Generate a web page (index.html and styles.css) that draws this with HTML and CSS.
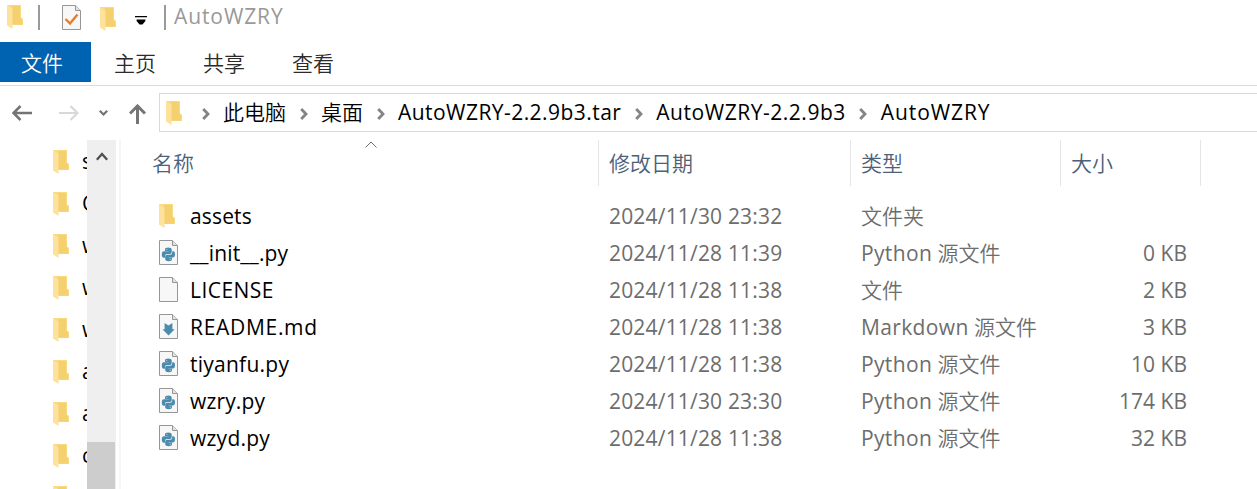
FILE: index.html
```html
<!DOCTYPE html>
<html lang="zh-CN">
<head>
<meta charset="utf-8">
<title>AutoWZRY</title>
<link rel="stylesheet" href="styles.css">
</head>
<body>
<svg class="defs" width="0" height="0">
  <symbol id="folder" viewBox="0 0 16 24">
    <path d="M0 0H14V12.5L16 14V20H4Z" fill="#f9da80"/>
    <path d="M5 1H13V12.5L15 14.5V19.5H5Z" fill="#f4d06e"/>
    <path d="M0 0L5.5 3.5V24L0 20.5Z" fill="#fee29b"/>
  </symbol>
  <symbol id="page" viewBox="0 0 19 25">
    <path d="M.5.5H13.5L18.5 5.5V24.5H.5Z" fill="#f7f7f7" stroke="#969696"/>
    <path d="M13.5 .5V5.5H18.5" fill="#e2e2e2" stroke="#969696"/>
  </symbol>
  <symbol id="python" viewBox="0 0 19 25">
    <use href="#page"/>
    <path d="M6 11V9.3Q6 7.6 9.2 7.6T12.7 9.5V12.3Q12.7 14 11 14H7.8Q6 14 6 16V17.7H4.8Q2.8 17.7 2.8 14.4T5 11.2H9.7V11Z" fill="#4b8bad"/>
    <path d="M13 17.8V19.3Q13 21.2 9.7 21.2T6.2 19.3V16.6Q6.2 14.8 8 14.8H11.2Q13.2 14.8 13.2 12.8V11.2H14.3Q16 11.2 16 14.3T14 17.5H9.3V17.8Z" fill="#4b8bad"/>
    <path d="M7.2 9.2h1.1v.9H7.2zM10.7 18.8h1.1v.9h-1.1z" fill="#c9dde7"/>
  </symbol>
  <symbol id="markdown" viewBox="0 0 19 25">
    <use href="#page"/>
    <path d="M5.6 9L9.5 11.5L13.4 9V15.2H15.7L9.5 21.5L3.5 15.2H5.6Z" fill="#4b8bad"/>
  </symbol>
  <symbol id="sep" viewBox="0 0 8 12"><path d="M1.2 1L6 6L1.2 11" fill="none" stroke="#848484" stroke-width="2.8"/></symbol>
</svg>

<header class="titlebar">
  <svg class="folder"><use href="#folder"/></svg>
  <i class="bar bar-a"></i>
  <svg class="page check" viewBox="0 0 19 25"><use href="#page"/><path d="M3.5 14L8 18.5L15.5 9.5" fill="none" stroke="#e47e2c" stroke-width="2.4"/></svg>
  <svg class="folder second"><use href="#folder"/></svg>
  <svg class="customize" viewBox="0 0 12 9"><path d="M0 0H12V1.3H0ZM1.6 3.5H10.4V5L7.5 8.5H4.5L1.6 5Z"/></svg>
  <i class="bar bar-b"></i>
  <span class="title">AutoWZRY</span>
</header>

<nav class="tabs">
  <span class="tab active">文件</span><span class="tab">主页</span><span class="tab">共享</span><span class="tab">查看</span>
</nav>

<div class="navigation">
  <div class="arrows">
    <svg class="back" viewBox="0 0 20 16"><path d="M20 8H2M8.5 1L1.5 8L8.5 15" fill="none" stroke="#747474" stroke-width="2.5"/></svg>
    <svg class="forward" viewBox="0 0 20 16"><path d="M0 8H18M11.5 1L18.5 8L11.5 15" fill="none" stroke="#d8d8d8" stroke-width="2.2"/></svg>
    <svg class="recent" viewBox="0 0 9 6"><path d="M.8.8L4.5 4.5L8.2.8" fill="none" stroke="#747474" stroke-width="2.2"/></svg>
    <svg class="up" viewBox="0 0 17 20"><path d="M8.5 20V2M1 9.5L8.5 2L16 9.5" fill="none" stroke="#747474" stroke-width="3"/></svg>
  </div>
  <div class="address">
    <svg class="folder"><use href="#folder"/></svg>
    <svg class="sep"><use href="#sep"/></svg><span class="crumb pc">此电脑</span>
    <svg class="sep"><use href="#sep"/></svg><span class="crumb desk">桌面</span>
    <svg class="sep"><use href="#sep"/></svg><span class="crumb tar">AutoWZRY-2.2.9b3.tar</span>
    <svg class="sep"><use href="#sep"/></svg><span class="crumb ver">AutoWZRY-2.2.9b3</span>
    <svg class="sep"><use href="#sep"/></svg><span class="crumb last">AutoWZRY</span>
  </div>
</div>

<main class="content">
  <aside class="tree">
    <div class="node"><svg class="folder"><use href="#folder"/></svg><span>s</span></div>
    <div class="node"><svg class="folder"><use href="#folder"/></svg><span>C</span></div>
    <div class="node"><svg class="folder"><use href="#folder"/></svg><span>w</span></div>
    <div class="node"><svg class="folder"><use href="#folder"/></svg><span>w</span></div>
    <div class="node"><svg class="folder"><use href="#folder"/></svg><span>w</span></div>
    <div class="node"><svg class="folder"><use href="#folder"/></svg><span>a</span></div>
    <div class="node"><svg class="folder"><use href="#folder"/></svg><span>a</span></div>
    <div class="node"><svg class="folder"><use href="#folder"/></svg><span>c</span></div>
    <div class="node"><svg class="folder"><use href="#folder"/></svg></div>
  </aside>
  <div class="scrollbar">
    <svg viewBox="0 0 12 9"><path d="M.8 7.8L6 2L11.2 7.8" fill="none" stroke="#505050" stroke-width="2.4"/></svg>
    <div class="thumb"></div>
  </div>
  <section class="files">
    <div class="grid head">
      <span class="name">名称<svg class="sort" viewBox="0 0 12 7"><path d="M.5 6.5L6 1L11.5 6.5" fill="none" stroke="#6c6c6c"/></svg></span>
      <span>修改日期</span><span>类型</span><span>大小</span>
    </div>
    <div class="grid row"><span class="name"><svg class="folder"><use href="#folder"/></svg><b class="n1">assets</b></span><span class="date">2024/11/30 23:32</span><span>文件夹</span><span class="size"></span></div>
    <div class="grid row"><span class="name"><svg class="page"><use href="#python"/></svg><b class="n2">__init__.py</b></span><span class="date">2024/11/28 11:39</span><span><em>Python</em> 源文件</span><span class="size">0 KB</span></div>
    <div class="grid row"><span class="name"><svg class="page"><use href="#page"/></svg><b class="n3">LICENSE</b></span><span class="date">2024/11/28 11:38</span><span>文件</span><span class="size">2 KB</span></div>
    <div class="grid row"><span class="name"><svg class="page"><use href="#markdown"/></svg><b class="n4">README.md</b></span><span class="date">2024/11/28 11:38</span><span><em>Markdown</em> 源文件</span><span class="size">3 KB</span></div>
    <div class="grid row"><span class="name"><svg class="page"><use href="#python"/></svg><b class="n5">tiyanfu.py</b></span><span class="date">2024/11/28 11:38</span><span><em>Python</em> 源文件</span><span class="size">10 KB</span></div>
    <div class="grid row"><span class="name"><svg class="page"><use href="#python"/></svg><b class="n6">wzry.py</b></span><span class="date">2024/11/30 23:30</span><span><em>Python</em> 源文件</span><span class="size">174 KB</span></div>
    <div class="grid row"><span class="name"><svg class="page"><use href="#python"/></svg><b class="n7">wzyd.py</b></span><span class="date">2024/11/28 11:38</span><span><em>Python</em> 源文件</span><span class="size">32 KB</span></div>
  </section>
</main>
</body>
</html>
```
FILE: styles.css
```css
* { box-sizing: border-box; }
body {
  margin: 0;
  width: 1257px;
  height: 489px;
  overflow: hidden;
  background: #fff;
  color: #000;
  font: 21px/30px "Open Sans", "Noto Sans CJK SC DemiLight", "Noto Sans CJK SC Light", "Noto Sans CJK SC", sans-serif;
  display: flex;
  flex-direction: column;
}
svg { display: block; flex: none; }
b, em { font-weight: 400; font-style: normal; }
.defs { position: absolute; }
.folder { width: 16px; height: 24px; }
.page { width: 19px; height: 25px; }

.titlebar { height: 42px; flex: none; display: flex; align-items: flex-start; padding: 5px 0 0 7px; }
.bar { width: 2px; height: 25px; background: #9a9a9a; }
.bar-a { margin-left: 15px; }
.check { margin-left: 22px; }
.second { margin: 2px 0 0 19px; }
.customize { width: 12px; height: 9px; margin: 11px 0 0 19px; }
.bar-b { margin-left: 17px; }
.title { color: #999; margin: -4px 0 0 8px; letter-spacing: .9px; }

.tabs { height: 44px; flex: none; display: flex; border-bottom: 1px solid #dadbdc; }
.tab { height: 40px; line-height: 42px; color: #2b2b2b; margin-right: 47px; }
.tab.active { width: 91px; padding-left: 21px; margin-right: 23px; background: #0063b1; color: #fff; }

.navigation { height: 54px; flex: none; display: flex; padding-top: 7px; }
.arrows { width: 159px; height: 40px; display: flex; align-items: center; padding-left: 12px; }
.back, .forward { width: 20px; height: 16px; }
.forward { margin-left: 27px; }
.recent { width: 9px; height: 6px; margin-left: 20px; }
.up { width: 17px; height: 20px; margin: 2px 0 0 21px; }
.address { flex: 1; height: 39px; border: 1px solid #d9d9d9; border-right: 0; display: flex; align-items: center; padding-left: 6px; white-space: nowrap; }
.crumb { margin-top: -2px; }
.sep { width: 8px; height: 12px; margin: 2px 13.5px 0 13.5px; }
.address .folder + .sep { margin-left: 20px; margin-right: 13px; }
.tar { letter-spacing: .45px; }
.ver { letter-spacing: .53px; }
.last { letter-spacing: .9px; }

.content { flex: 1; min-height: 0; display: flex; }
.tree { width: 87px; overflow: hidden; padding-left: 53px; }
.node { height: 42px; display: flex; align-items: center; }
.node .folder { margin-top: 2px; }
.node span { margin-left: 13px; }
.scrollbar { width: 29px; background: #efefef; display: flex; flex-direction: column; justify-content: space-between; }
.scrollbar svg { width: 12px; height: 9px; margin: 12px 0 0 9px; }
.thumb { width: 28px; height: 47px; background: #cdcdcd; }
.files { flex: 1; margin-left: 3px; border-left: 2px solid #f5f5f5; }
.grid { display: grid; grid-template-columns: 478px 252px 210px 140px; align-items: center; white-space: nowrap; color: #6d6d6d; }
.grid > span { padding-left: 10px; }
.head { height: 46px; margin-bottom: 11px; color: #4c607a; }
.head > span { height: 46px; line-height: 46px; border-right: 1px solid #e5e5e5; }
.head > .name { position: relative; padding-left: 31px; }
.sort { position: absolute; left: 244px; top: 1px; width: 12px; height: 7px; }
.row { height: 37px; }
.row > .name { display: flex; align-items: center; padding-left: 38px; color: #000; }
.row .folder { margin-right: 3px; }
.row b { margin-left: 12px; }
.n1, .n2, .n6 { letter-spacing: .15px; }
.n3 { letter-spacing: .45px; }
.n4 { letter-spacing: .7px; }
.n5, .n7 { letter-spacing: .25px; }
.date { letter-spacing: .18px; }
.row em { letter-spacing: .35px; }
.grid > .size { text-align: right; padding-right: 14px; }
```
